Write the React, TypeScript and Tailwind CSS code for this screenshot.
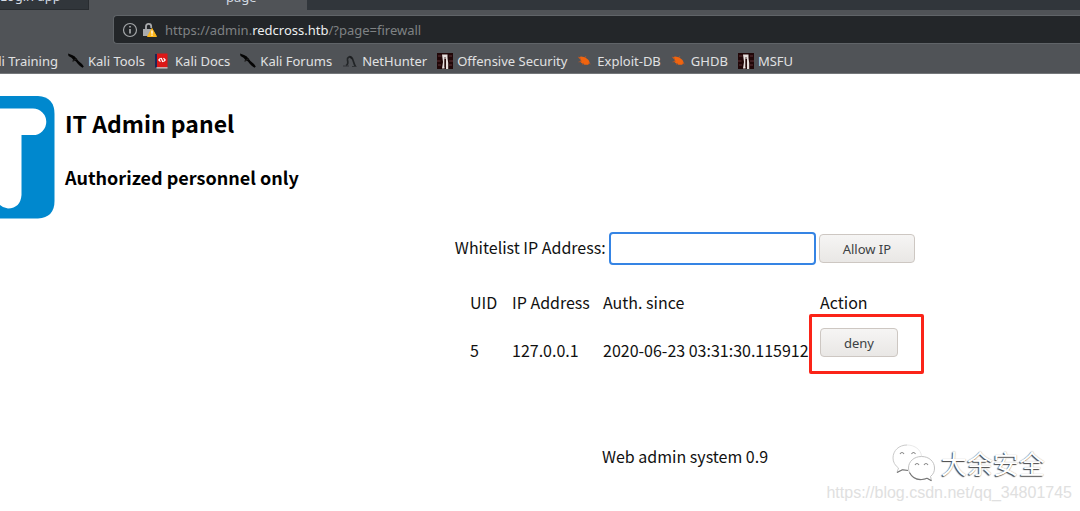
import type { ReactNode } from "react";

function KaliKnife() {
  return (
    <svg width="16" height="16" viewBox="0 0 16 16" fill="#050505" aria-hidden="true">
      <path d="M0 0.500 4 2 6.500 3.300 8.500 5.500 10.500 8 14 11 15.800 13.500 14.500 14.800 12 13 9.500 10.500 8 8.500 5.500 7 3.500 4.800 0.500 3Z" />
      <path d="M4 8 8.500 5 9.200 6 5 8.800Z" fill="#1b1b1b" />
    </svg>
  );
}

function Book() {
  return (
    <svg width="16" height="16" viewBox="0 0 16 16" aria-hidden="true">
      <path d="M0 1h3v13.500H0z" fill="#1d2756" />
      <path d="M2 0.500h10.500V14.500H2z" fill="#dc1717" />
      <path d="M1.500 14.200h11V15.500h-11z" fill="#d8c9c9" />
      <path d="M5.500 5.200 3.800 7l1.700 1.700M8.500 5.200 10.200 7l-1.700 1.700M6.200 5l1.600 4" fill="none" stroke="#fff" strokeWidth="1.200" />
    </svg>
  );
}

function NetHunterMark() {
  return (
    <svg width="16" height="16" viewBox="0 0 16 16" aria-hidden="true">
      <path d="M4 12.500C6.500 11.500 6 9 5.500 7 5 4.500 7.500 3 9.500 4.500c2 1.500 1.500 5 4 9" fill="none" stroke="#222527" strokeWidth="1.700" />
      <path d="M7.500 2.500 10 4 11 7 8 5Z" fill="#1c1e20" />
      <path d="M1 13h6M10 13.500h4.500" stroke="#303336" />
    </svg>
  );
}

function OffSec() {
  return (
    <svg width="16" height="16" viewBox="0 0 16 16" aria-hidden="true">
      <path d="M0 0h16v16H0z" fill="#210708" />
      <path d="M1 3h3.500M12 3h3M0 8h3.500M12 8h4M1 12h3M12 12h3" stroke="#4a2527" strokeWidth="1.300" />
      <path d="M5 1.500h5.500V5L11.200 10v6H9V6H7.500V15.500H5L6 9Z" fill="#e6dfdd" />
      <path d="M8 4v10" stroke="#2c1112" strokeWidth="0.800" />
    </svg>
  );
}

function Bug() {
  return (
    <svg width="16" height="16" viewBox="0 0 16 16" aria-hidden="true">
      <path d="M1.500 4.500 4 3.500 8 4.300 11.500 7l1.200 2.500-1.500 2.300L7.500 11.800 4.500 10 3 8.500 4 7Z" fill="#f0640f" />
      <path d="M1 4 4 5.500M1.500 9 5 8M5 11.500 7 10M8 4.500 9 3M11.500 10 13.500 11" stroke="#b55625" strokeWidth="0.800" />
    </svg>
  );
}

const bookmarks: { label: string; icon: ReactNode }[] = [
  { label: "Kali Tools", icon: <KaliKnife /> },
  { label: "Kali Docs", icon: <Book /> },
  { label: "Kali Forums", icon: <KaliKnife /> },
  { label: "NetHunter", icon: <NetHunterMark /> },
  { label: "Offensive Security", icon: <OffSec /> },
  { label: "Exploit-DB", icon: <Bug /> },
  { label: "GHDB", icon: <Bug /> },
  { label: "MSFU", icon: <OffSec /> },
];

function BrowserChrome() {
  return (
    <header className="bg-[#505357] font-['Noto_Sans',sans-serif] text-[13px]">
      <div className="flex h-[10px] items-end overflow-hidden bg-[#31363b] text-[#d3dae3]">
        <div className="flex h-full w-[89px] items-end border-r border-b border-[#282c30] pb-[6px]">
          <span className="leading-[14px] whitespace-nowrap">Login app</span>
        </div>
        <div className="flex h-full w-[218px] items-end bg-[#505357] pb-[6px] pl-[137px]">
          <span className="leading-[14px]">page</span>
        </div>
      </div>
      <div className="pt-[5px] pl-[113px]">
        <div className="flex h-[29px] items-center rounded-l border border-r-0 border-[#606468] bg-[#232629] pl-2">
          <svg width="16" height="16" viewBox="0 0 16 16" fill="none" stroke="#a4a7a9" aria-hidden="true">
            <circle cx="8" cy="8" r="6.500" strokeWidth="1.200" />
            <path d="M8 7v4.500M8 4v1.600" strokeWidth="1.700" />
          </svg>
          <svg className="ml-1" width="16" height="16" viewBox="0 0 16 16" aria-hidden="true">
            <path d="M4 8V4.500a2.600 2.600 0 0 1 5.200 0V6" fill="none" stroke="#a9abad" strokeWidth="1.800" />
            <path d="M1 7h8v7H1z" fill="#a9abad" />
            <path d="M10 6.500 14.500 14.500H5.500Z" fill="#fbb51b" stroke="#fbb51b" strokeLinejoin="round" />
            <path d="M10 8.500v3.200M10 12.500v1.300" stroke="#fff" strokeWidth="1.300" />
          </svg>
          <label htmlFor="url" className="hidden">Address</label>
          <div className="relative ml-[7px] flex-1">
            <input id="url" readOnly value="https://admin.redcross.htb/?page=firewall" className="block w-full bg-transparent text-transparent outline-none" />
            <span aria-hidden="true" className="pointer-events-none absolute inset-0 text-[#7f8284]">
              https://admin.<span className="text-[#eceeef]">redcross.htb</span>/?page=firewall
            </span>
          </div>
        </div>
      </div>
      <nav className="flex h-[30px] items-center gap-[10px] overflow-hidden border-b border-[#74777a] pt-1 whitespace-nowrap text-[#e0e1e2]">
        <a href="#training" className="flex w-[58px] shrink-0 justify-end">Kali Training</a>
        {bookmarks.map((b) => (
          <a key={b.label} href="#bookmark" className="flex shrink-0 items-center gap-1">
            {b.icon}
            {b.label}
          </a>
        ))}
      </nav>
    </header>
  );
}

function Watermark() {
  return (
    <div className="pointer-events-none absolute right-2 bottom-2 flex flex-col items-end whitespace-nowrap">
      <div className="mr-[27px] flex items-center gap-[6px]">
        <svg width="44" height="40" viewBox="0 0 44 40" fill="#fff" strokeLinejoin="round" aria-hidden="true">
          <path d="M16 2C8 2 2 7.500 2 15c0 4 2 7.500 5.500 10L6 29.500 11.500 26.500Q14 27.500 17 27.300" stroke="#c4c4c4" strokeWidth="0.900" />
          <path d="M6 29.500 11.500 26.800 17 27.500" fill="none" stroke="#777" strokeWidth="1.100" />
          <path d="M16 2C24 2 30 7 30.500 13" fill="none" stroke="#e6e6e6" strokeWidth="0.900" />
          <path d="M30.500 13.500C23 13.500 17.500 18.500 17.500 25S23 36.500 30.500 36.500q3-0.200 5.500-1.200L40.500 37.500 39.500 33.500C42.500 31 43.500 28.500 43.500 25 43.500 18.500 38 13.500 30.500 13.500Z" stroke="#bbb" strokeWidth="0.900" />
          <path d="M18.500 29.500C21 34.500 26 37 31 36.500q3-0.200 5-1.200L40.500 37.800" fill="none" stroke="#777" strokeWidth="1.100" />
          <path d="M9 11q2-3 4 0M20.500 11q2-3 4 0M24 22q2-3 4 0M33 22q2-3 4 0" fill="none" stroke="#888" strokeWidth="1.100" />
        </svg>
        <span className="text-[26px] leading-8 text-white [text-shadow:-1px_1px_1px_#444,0_0_1px_#999]">大余安全</span>
      </div>
      <span className="font-['Liberation_Sans',sans-serif] text-base leading-5 text-[#e0e0e0]">
        https://blog.csdn.net/qq_34801745
      </span>
    </div>
  );
}

const buttonStyle =
  "block h-[29px] rounded border border-[#cdc7c2] bg-linear-to-b from-[#f6f5f4] to-[#e9e7e5] px-[23px] font-['Noto_Sans',sans-serif] text-[13px] leading-5 text-[#3c4143]";

export default function App() {
  return (
    <div className="relative min-h-screen bg-white font-['Noto_Sans_CJK_SC',sans-serif] text-base leading-6 text-[#111]">
      <BrowserChrome />
      <main>
        <div className="flex pt-[22px]">
          <svg className="shrink-0" width="55" height="123" viewBox="0 0 55 123" role="img" aria-label="IT">
            <path d="M0 0H38Q54.500 1 54.500 18V105Q54.500 121.500 38 122.500H0Z" fill="#0088ce" />
            <path d="M0 12.500H33a13.300 13.300 0 0 1 0 26.600H21.500V99Q20.500 112 8 112.500 3 112 0 109Z" fill="#fff" />
          </svg>
          <div className="pl-[10px] text-black">
            <h1 className="pt-[9px] text-[23px] leading-9 font-bold">IT Admin panel</h1>
            <h2 className="pt-[22px] text-lg leading-7 font-bold">Authorized personnel only</h2>
          </div>
        </div>
        <div className="flex flex-col items-center pl-[290px] whitespace-nowrap">
          <form className="flex items-center gap-[3px] pt-[13px]" onSubmit={(e) => e.preventDefault()}>
            <label htmlFor="ip" className="pb-1">Whitelist IP Address:</label>
            <input id="ip" className="h-[33px] w-[207px] rounded border-2 border-[#3584e4] bg-white px-2 outline-none" />
            <button className={buttonStyle}>Allow IP</button>
          </form>
          <table className="mt-[25px] w-[430px] table-fixed text-left">
            <thead>
              <tr className="h-[38px] align-top">
                <th className="w-[42px] font-normal">UID</th>
                <th className="w-[91px] font-normal">IP Address</th>
                <th className="w-[217px] font-normal">Auth. since</th>
                <th className="font-normal">Action</th>
              </tr>
            </thead>
            <tbody>
              <tr className="align-top">
                <td className="pt-[10px]">5</td>
                <td className="pt-[10px]">127.0.0.1</td>
                <td className="pt-[10px]">2020-06-23 03:31:30.115912</td>
                <td>
                  <div className="relative">
                    <button className={buttonStyle}>deny</button>
                    <div className="pointer-events-none absolute -top-[14px] -left-[11px] h-[60px] w-[115px] rounded-[2px] border-[3px] border-[#fb2418]" />
                  </div>
                </td>
              </tr>
            </tbody>
          </table>
          <p className="mt-[82px]">Web admin system 0.9</p>
        </div>
      </main>
      <Watermark />
    </div>
  );
}
